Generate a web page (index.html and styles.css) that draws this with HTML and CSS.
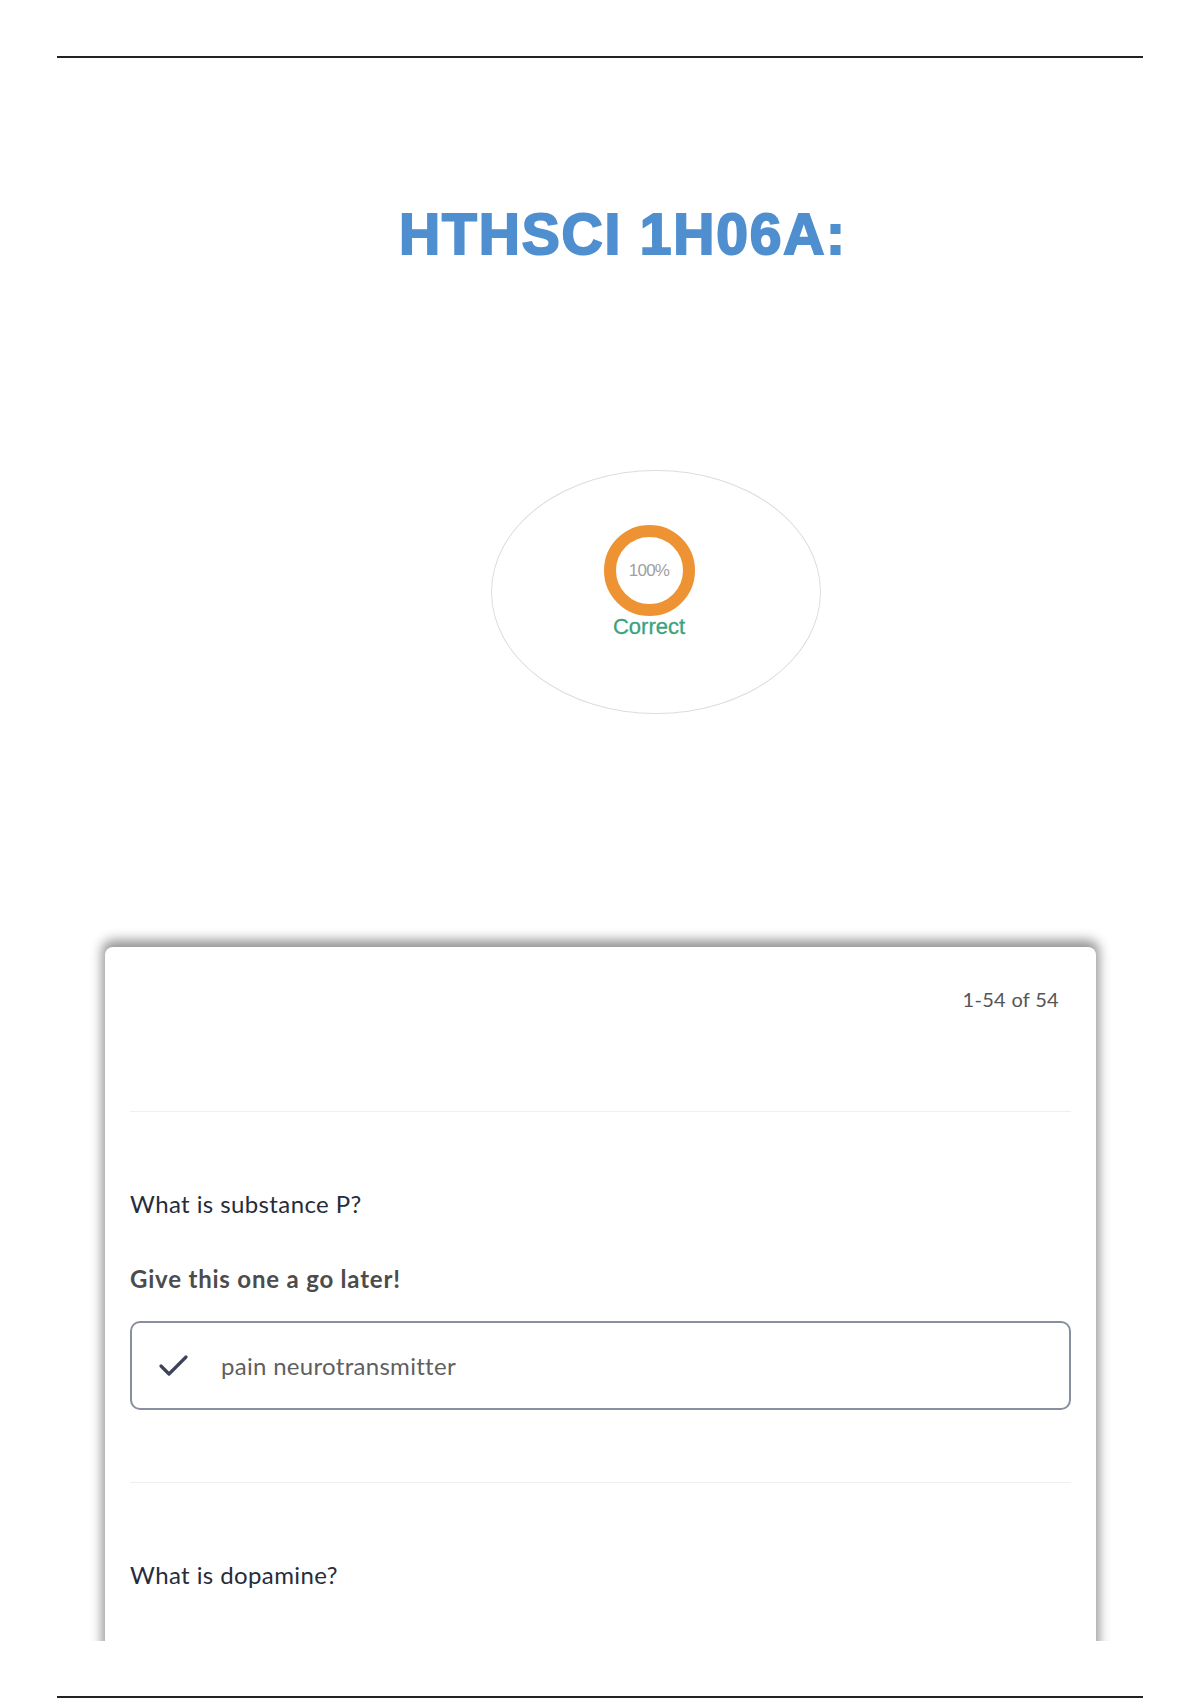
FILE: index.html
```html
<!DOCTYPE html>
<html lang="en">
  <head>
    <meta charset="UTF-8" />
    <meta name="viewport" content="width=device-width, initial-scale=1.0" />
    <title>HTHSCI 1H06A</title>
    <link rel="stylesheet" href="styles.css">
  </head>
  <body>
    <div class="page">
      <hr class="rule rule-top" />

      <h1 class="titel">HTHSCI 1H06A:</h1>

      <div class="score">
        <div class="ring"><span>100%</span></div>
        <p class="correct">Correct</p>
      </div>

      <div class="card-clip">
        <section class="card">
          <div class="card-head">
            <p class="count">1-54 of 54</p>
          </div>

          <article class="item">
            <p class="question">What is substance P?</p>
            <p class="hint">Give this one a go later!</p>
            <div class="answer">
              <svg class="check" width="32" height="26" viewBox="0 0 32 26">
                <polyline points="3,13 11,21 28,4" fill="none" stroke="#3d4459" stroke-width="3.2" stroke-linecap="round" stroke-linejoin="round" />
              </svg>
              <span>pain neurotransmitter</span>
            </div>
          </article>

          <article class="item">
            <p class="question">What is dopamine?</p>
          </article>
        </section>
      </div>

      <hr class="rule rule-bottom" />
    </div>
  </body>
</html>
```

FILE: styles.css
```css
* {
  margin: 0px;
  box-sizing: border-box;
}

body {
  background-color: white;
  font-family: Lato, "Noto Sans", sans-serif;
}

.page {
  padding: 0px 57px;
}

.rule {
  border: none;
  height: 2px;
  background-color: #222;
}

.rule-top {
  margin-top: 56px;
}

.rule-bottom {
  margin-top: 55px;
}

.titel {
  margin-top: 146px;
  padding-left: 46px;
  text-align: center;
  font-family: "Liberation Sans", Arial, sans-serif;
  font-size: 57px;
  line-height: 60px;
  font-weight: 700;
  letter-spacing: 1.8px;
  color: #4f8fcf;
  -webkit-text-stroke: 2px #4f8fcf;
}

.score {
  margin-top: 206px;
  margin-left: 434px;
  width: 330px;
  height: 244px;
  border: 1px solid #d9dee3;
  border-radius: 50%;
  display: flex;
  flex-direction: column;
  align-items: center;
  padding-top: 54px;
  padding-right: 14px;
}

.ring {
  width: 91px;
  height: 91px;
  border: 12px solid #ee9333;
  border-radius: 50%;
  display: flex;
  justify-content: center;
  align-items: center;
}

.ring span {
  font-family: "Liberation Sans", Arial, sans-serif;
  font-size: 17px;
  letter-spacing: -0.8px;
  color: #a0a0a0;
}

.correct {
  margin-top: 0px;
  font-family: "Liberation Sans", Arial, sans-serif;
  font-size: 22px;
  line-height: 22px;
  color: #3aa37e;
  -webkit-text-stroke: 0.3px #3aa37e;
}

.card-clip {
  margin-top: 213px;
  height: 714px;
  padding: 20px 47px 0px 48px;
  overflow: hidden;
}

.card {
  min-height: 900px;
  background-color: white;
  border-radius: 8px;
  box-shadow: 0px -4px 12px 3px rgba(0, 0, 0, 0.42);
  padding: 0px 25px;
}

.card-head {
  height: 164px;
  display: flex;
  justify-content: flex-end;
  padding-top: 40px;
  padding-right: 12px;
}

.count {
  font-size: 20px;
  line-height: 24px;
  letter-spacing: 0.3px;
  color: #555;
}

.item {
  border-top: 1px solid #eeeff2;
  padding-top: 76px;
  padding-bottom: 72px;
}

.question {
  font-size: 24px;
  line-height: 32px;
  letter-spacing: 0.4px;
  color: #262c3b;
}

.hint {
  margin-top: 43px;
  font-size: 24px;
  line-height: 32px;
  letter-spacing: 0.8px;
  font-weight: 700;
  color: #4c4c4c;
}

.answer {
  margin-top: 26px;
  height: 89px;
  border: 2px solid #8a8f9f;
  border-radius: 10px;
  display: flex;
  align-items: center;
  padding-left: 26px;
  gap: 31px;
  font-size: 24px;
  letter-spacing: 0.3px;
  color: #5f5f5f;
}
```
